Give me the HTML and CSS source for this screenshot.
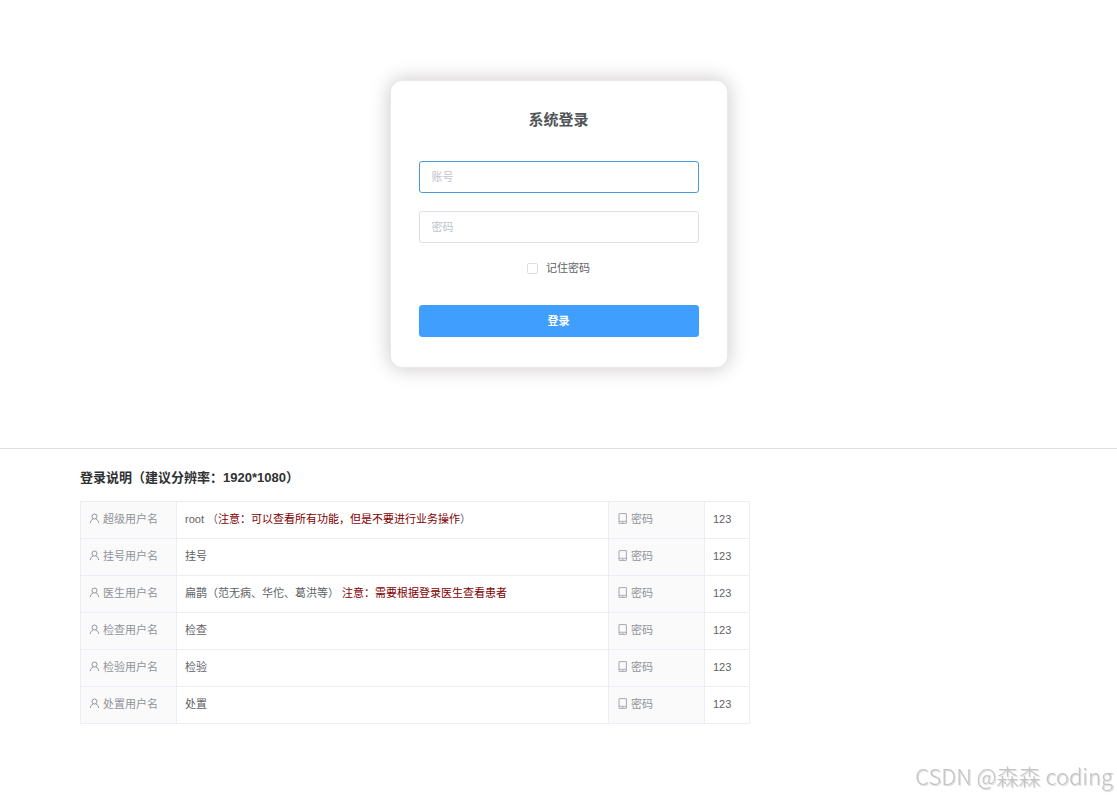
FILE: index.html
```html
<!DOCTYPE html>
<html lang="zh-CN">
<head>
    <meta charset="UTF-8">
    <meta name="viewport" content="width=device-width, initial-scale=1.0">
    <title>系统登录</title>
    <link rel="stylesheet" href="styles.css">
</head>
<body>
    <!-- Shared icons -->
    <svg class="sprite" aria-hidden="true">
        <symbol id="icon-user" viewBox="0 0 11 11">
            <circle cx="5.5" cy="3.5" r="2.5"/>
            <path d="M1.3 10C1.4 7.9 2.6 6.7 4.2 6.1M6.8 6.1C8.4 6.7 9.6 7.9 9.7 10"/>
        </symbol>
        <symbol id="icon-phone" viewBox="0 0 11 11">
            <rect x="2" y=".6" width="7.4" height="9.8" rx=".4" stroke-width=".8"/>
            <path d="M2 8.3h7.4M5 9.4h1.4" stroke-width=".7"/>
        </symbol>
    </svg>

    <main class="login">
        <form class="login-card">
            <h1 class="login-title">系统登录</h1>
            <input class="field active" type="text" placeholder="账号" aria-label="账号">
            <input class="field" type="password" placeholder="密码" aria-label="密码">
            <label class="remember">
                <input type="checkbox" name="remember">
                <span>记住密码</span>
            </label>
            <button class="submit" type="button">登录</button>
        </form>
    </main>

    <section class="notes">
        <h2 class="notes-title">登录说明（建议分辨率：1920*1080）</h2>
        <table class="accounts">
            <colgroup>
                <col class="col-label">
                <col>
                <col class="col-label">
                <col class="col-pass">
            </colgroup>
            <tbody>
                <tr>
                    <th scope="row"><svg class="icon"><use href="#icon-user"/></svg>超级用户名</th>
                    <td>root （<span class="warn">注意：可以查看所有功能，但是不要进行业务操作</span>）</td>
                    <th><svg class="icon"><use href="#icon-phone"/></svg>密码</th>
                    <td>123</td>
                </tr>
                <tr>
                    <th scope="row"><svg class="icon"><use href="#icon-user"/></svg>挂号用户名</th>
                    <td>挂号</td>
                    <th><svg class="icon"><use href="#icon-phone"/></svg>密码</th>
                    <td>123</td>
                </tr>
                <tr>
                    <th scope="row"><svg class="icon"><use href="#icon-user"/></svg>医生用户名</th>
                    <td>扁鹊（范无病、华佗、葛洪等） <span class="warn">注意：需要根据登录医生查看患者</span></td>
                    <th><svg class="icon"><use href="#icon-phone"/></svg>密码</th>
                    <td>123</td>
                </tr>
                <tr>
                    <th scope="row"><svg class="icon"><use href="#icon-user"/></svg>检查用户名</th>
                    <td>检查</td>
                    <th><svg class="icon"><use href="#icon-phone"/></svg>密码</th>
                    <td>123</td>
                </tr>
                <tr>
                    <th scope="row"><svg class="icon"><use href="#icon-user"/></svg>检验用户名</th>
                    <td>检验</td>
                    <th><svg class="icon"><use href="#icon-phone"/></svg>密码</th>
                    <td>123</td>
                </tr>
                <tr>
                    <th scope="row"><svg class="icon"><use href="#icon-user"/></svg>处置用户名</th>
                    <td>处置</td>
                    <th><svg class="icon"><use href="#icon-phone"/></svg>密码</th>
                    <td>123</td>
                </tr>
            </tbody>
        </table>
    </section>

    <div class="watermark">CSDN @森森 coding</div>
</body>
</html>
```

FILE: styles.css
```css
* {
    box-sizing: border-box;
}

body {
    margin: 0;
    font-family: "Liberation Sans", "Noto Sans CJK SC", sans-serif;
    font-size: 11px;
    line-height: 20px;
    color: #606266;
    background: #fff;
}

.sprite {
    position: absolute;
    width: 0;
    height: 0;
}

/* Login form */
.login {
    display: flex;
    justify-content: center;
    padding: 80px 20px;
    border-bottom: 1px solid #dcdfe6;
}

.login-card {
    display: flex;
    flex-direction: column;
    width: 338px;
    padding: 28px 28px 30px;
    border: 1px solid #eaeaea;
    border-radius: 12px;
    background: #fff;
    box-shadow: 0 0 20px #cac6c6;
}

.login-title {
    margin: 0 0 30px;
    font-size: 15px;
    line-height: 22px;
    text-align: center;
    color: #505458;
}

.field {
    width: 100%;
    height: 32px;
    margin: 0 0 18px;
    padding: 0 12px;
    border: 1px solid #dcdfe6;
    border-radius: 3px;
    outline: none;
    font: inherit;
    color: #606266;
}

.field::placeholder {
    color: #c0c4cc;
}

.field.active,
.field:focus {
    border-color: #4a9ad8;
}

.remember {
    display: flex;
    align-items: center;
    justify-content: center;
    gap: 8px;
    margin-bottom: 30px;
    line-height: 14px;
    cursor: pointer;
}

.remember input {
    appearance: none;
    width: 11px;
    height: 11px;
    margin: 0;
    border: 1px solid #dcdfe6;
    border-radius: 2px;
    background: #fff;
}

.remember input:checked {
    border-color: #409eff;
    background: #409eff;
}

.submit {
    width: 100%;
    height: 32px;
    border: 1px solid #409eff;
    border-radius: 3px;
    background: #409eff;
    font: inherit;
    font-weight: bold;
    color: #fff;
    cursor: pointer;
}

/* Account list */
.notes {
    padding: 18px 80px 0;
}

.notes-title {
    margin: 0 0 12px;
    font-size: 13px;
    line-height: 22px;
    color: #303133;
}

.accounts {
    width: 70%;
    border-collapse: collapse;
    table-layout: fixed;
}

.col-label {
    width: 96px;
}

.col-pass {
    width: 45px;
}

.accounts th,
.accounts td {
    height: 37px;
    padding: 0 8px 2px;
    border: 1px solid #ebeef5;
    text-align: left;
    font-weight: normal;
    white-space: nowrap;
}

.accounts th {
    background: #fafafa;
    color: #909399;
}

.icon {
    width: 11px;
    height: 11px;
    margin-right: 3px;
    fill: none;
    stroke: currentColor;
    vertical-align: -1px;
}

.warn {
    color: #800000;
}

.watermark {
    position: fixed;
    right: 4px;
    bottom: 6px;
    font-family: "Noto Sans CJK SC", sans-serif;
    font-size: 22px;
    font-weight: 300;
    line-height: 32px;
    color: #c4c4c4;
    text-shadow: 1px 1px 1px #d8d8d8;
}
```
